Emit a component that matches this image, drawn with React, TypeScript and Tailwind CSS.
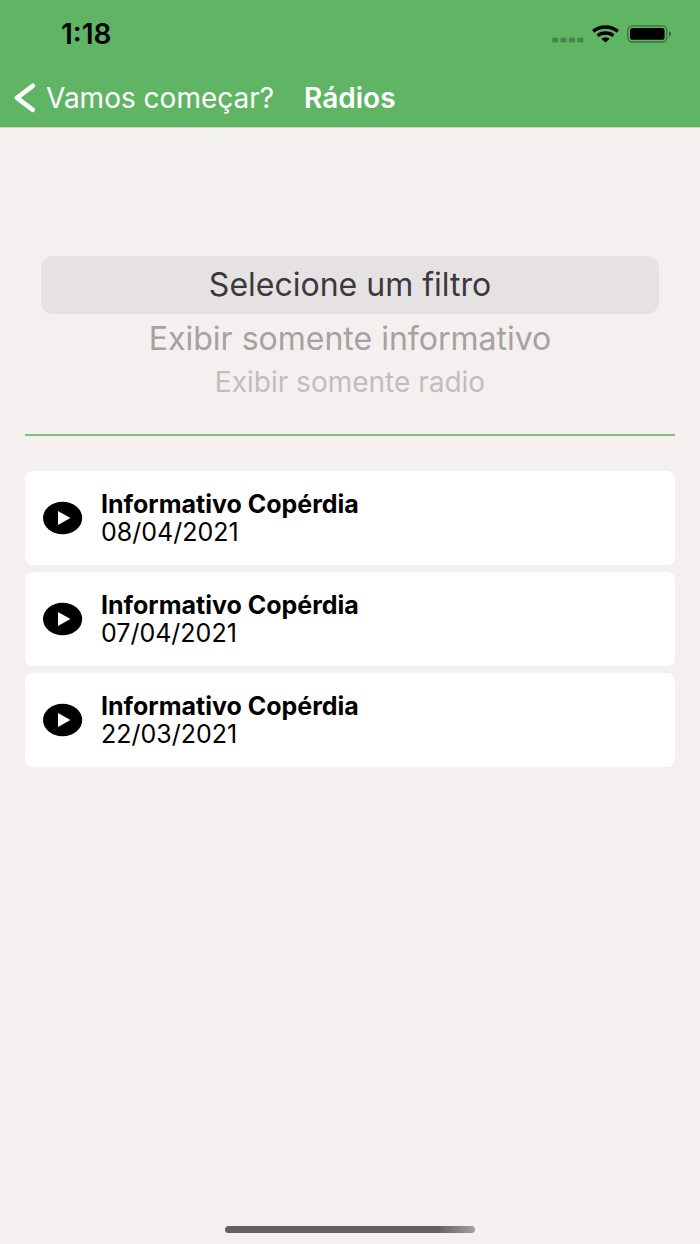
import { useState } from "react";

const filters = [
  { value: "todos", label: "Selecione um filtro", style: "h-[58px] rounded-xl bg-[#e6e2e3] text-[32px] text-[#3a3a3b]" },
  { value: "informativo", label: "Exibir somente informativo", style: "h-[50px] text-[32px] text-[#a5a2a2]" },
  { value: "radio", label: "Exibir somente radio", style: "h-9 text-[28px] text-[#c0bdbd]" },
];

const episodes = [
  { title: "Informativo Copérdia", date: "08/04/2021" },
  { title: "Informativo Copérdia", date: "07/04/2021" },
  { title: "Informativo Copérdia", date: "22/03/2021" },
];

function StatusIcons() {
  return (
    <div className="flex items-center gap-2">
      <svg width="32" height="20" viewBox="0 0 32 20" className="fill-black/25" aria-hidden="true">
        <rect x="0" y="13.5" width="6.2" height="5" rx="1.6" />
        <rect x="8.4" y="13.5" width="6.2" height="5" rx="1.6" />
        <rect x="16.8" y="13.5" width="6.2" height="5" rx="1.6" />
        <rect x="25.2" y="13.5" width="6.2" height="5" rx="1.6" />
      </svg>
      <svg width="27" height="18" viewBox="0 0 27 18" aria-hidden="true">
        <g fill="none" stroke="#000" strokeWidth="3.4">
          <path d="M1.2 6.4C8 .6 19 .6 25.8 6.4" />
          <path d="M5.6 10.8c4.2-3.8 11.6-3.8 15.8 0" />
        </g>
        <path d="M9.4 13.8c2.3-1.9 5.9-1.9 8.2 0L13.5 17.4z" />
      </svg>
      <svg width="45" height="18" viewBox="0 0 45 18" aria-hidden="true">
        <rect x="0.8" y="0.8" width="39" height="16.2" rx="4.5" fill="none" stroke="#000" strokeOpacity=".4" strokeWidth="1.3" />
        <rect x="3" y="3" width="34.6" height="11.8" rx="2.6" />
        <path d="M42 6.2c2.6.6 2.6 4.8 0 5.4z" fillOpacity=".45" />
      </svg>
    </div>
  );
}

function PlayIcon() {
  return (
    <svg width="40" height="34" viewBox="0 0 40 34" aria-hidden="true">
      <ellipse cx="19.6" cy="17" rx="19.6" ry="16.3" />
      <path d="M15 10v14l12.4-7z" fill="#fff" />
    </svg>
  );
}

export default function App() {
  const [filter, setFilter] = useState("todos");

  return (
    <div className="flex min-h-screen flex-col bg-[#f4f0ef] font-['Inter',sans-serif] text-black">
      <header className="border-b border-[#c9d6c7] bg-[#60b565] text-white">
        <div className="flex h-[68px] items-center justify-between pr-7 pl-[61px] text-black">
          <span className="text-[28px] font-semibold">1:18</span>
          <StatusIcons />
        </div>
        <nav className="flex h-[59px] items-center gap-[30px] pl-3.5 text-[28px]">
          <a href="#inicio" className="flex items-center gap-2.5">
            <svg width="22" height="30" viewBox="0 0 22 30" fill="none" stroke="currentColor" strokeWidth="4.6" strokeLinecap="round" strokeLinejoin="round" aria-hidden="true">
              <path d="M18.8 2.8 3 14.8l15.8 12" />
            </svg>
            Vamos começar?
          </a>
          <h1 className="font-semibold">Rádios</h1>
        </nav>
      </header>

      <main className="px-[25px]">
        <div role="radiogroup" aria-label="Filtro" className="border-b-2 border-[#7cbf80] px-4 pt-32 pb-[34px]">
          {filters.map((item) => (
            <label key={item.value} className={`relative flex cursor-pointer items-center justify-center ${item.style}`}>
              <input
                type="radio"
                name="filtro"
                value={item.value}
                checked={filter === item.value}
                onChange={() => setFilter(item.value)}
                className="absolute inset-0 cursor-pointer appearance-none"
              />
              {item.label}
            </label>
          ))}
        </div>

        <ul className="mt-[35px] space-y-[7px]">
          {episodes.map((episode) => (
            <li key={episode.date}>
              <button type="button" className="flex h-[94px] w-full items-center gap-[18px] rounded-lg bg-white px-[18px] text-left">
                <PlayIcon />
                <span className="text-[25px] leading-7">
                  <span className="block font-bold">{episode.title}</span>
                  <span className="block">{episode.date}</span>
                </span>
              </button>
            </li>
          ))}
        </ul>
      </main>

      {/* Home indicator */}
      <div className="mt-auto flex justify-center pb-[11px]">
        <div className="h-[7px] w-[250px] rounded-full bg-linear-to-r from-[#626061] from-85% to-[#a5a3a1]" />
      </div>
    </div>
  );
}
